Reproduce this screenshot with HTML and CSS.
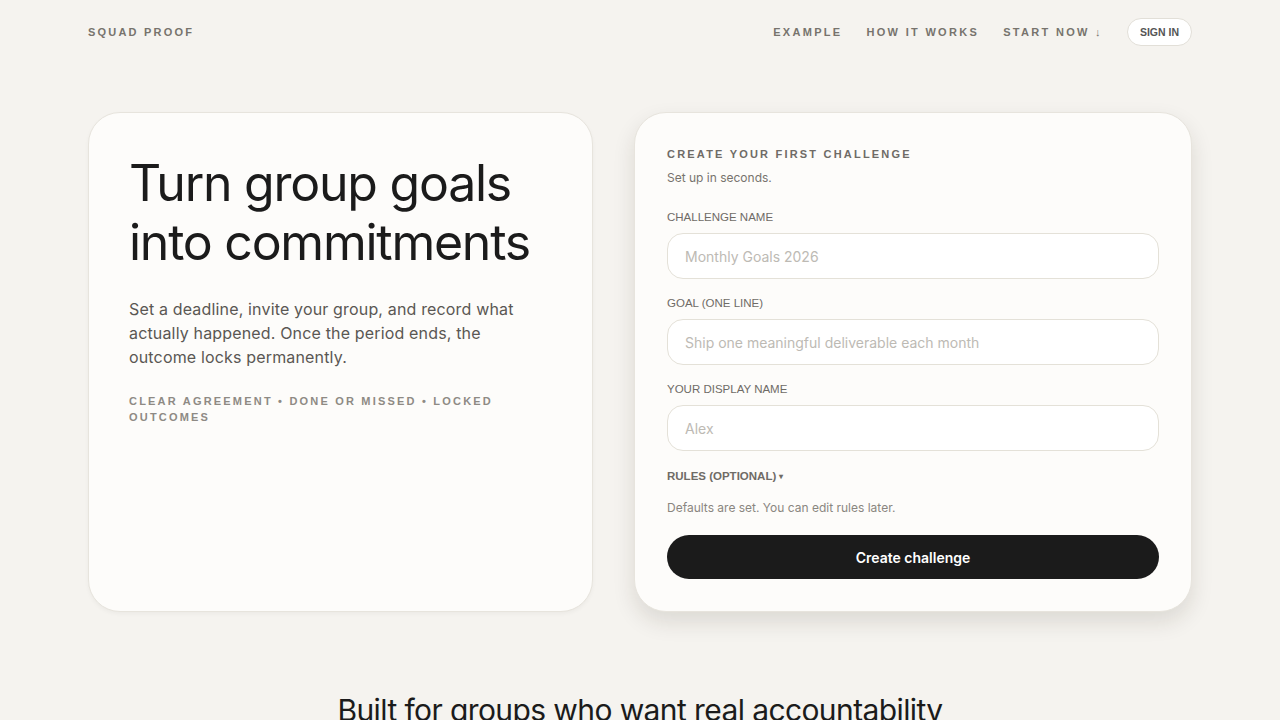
FILE: index.html
```html
<!DOCTYPE html>
<html lang="en">
<head>
<meta charset="utf-8">
<title>Squad Proof</title>
<link rel="stylesheet" href="styles.css">
</head>
<body>
<div class="page">
  <header class="nav">
    <div class="brand">SQUAD PROOF</div>
    <nav class="links">
      <a class="link" href="#">EXAMPLE</a>
      <a class="link" href="#">HOW IT WORKS</a>
      <a class="link" href="#">START NOW ↓</a>
      <a class="signin" href="#">SIGN IN</a>
    </nav>
  </header>

  <main class="hero">
    <section class="card intro">
      <h1 class="headline">Turn group goals into commitments</h1>
      <p class="lead">Set a deadline, invite your group, and record what actually happened. Once the period ends, the outcome locks permanently.</p>
      <p class="tags">CLEAR AGREEMENT • DONE OR MISSED • LOCKED OUTCOMES</p>
    </section>

    <section class="card form-card">
      <div class="form-title">CREATE YOUR FIRST CHALLENGE</div>
      <div class="form-sub">Set up in seconds.</div>
      <div class="fields">
        <label class="field">
          <span class="label">CHALLENGE NAME</span>
          <input class="input" type="text" placeholder="Monthly Goals 2026">
        </label>
        <label class="field">
          <span class="label">GOAL (ONE LINE)</span>
          <input class="input" type="text" placeholder="Ship one meaningful deliverable each month">
        </label>
        <label class="field">
          <span class="label">YOUR DISPLAY NAME</span>
          <input class="input" type="text" placeholder="Alex">
        </label>
      </div>
      <div class="rules">RULES (OPTIONAL) <span class="caret">▾</span></div>
      <div class="defaults">Defaults are set. You can edit rules later.</div>
      <button class="submit" type="button">Create challenge</button>
    </section>
  </main>

  <section class="built">
    <h2 class="built-title">Built for groups who want real accountability</h2>
  </section>
</div>
</body>
</html>
```

FILE: styles.css
```css
* { box-sizing: border-box; }
html, body { margin: 0; padding: 0; }
body {
  background: #f5f3ef;
  color: #1b1b1b;
  font-family: Inter, "Noto Sans", sans-serif;
  overflow: hidden;
}
.page {
  width: 1104px;
  margin: 0 auto;
}
.nav {
  height: 64px;
  display: flex;
  align-items: center;
  justify-content: space-between;
}
.brand {
  font-family: "Liberation Sans", Arial, sans-serif;
  font-weight: 700;
  font-size: 11px;
  letter-spacing: 0.2em;
  color: #77736d;
}
.links {
  display: flex;
  align-items: center;
  gap: 24px;
}
.link {
  font-family: "Liberation Sans", Arial, sans-serif;
  font-weight: 700;
  font-size: 11px;
  letter-spacing: 0.21em;
  color: #77736d;
  text-decoration: none;
}
.signin {
  font-family: "Liberation Sans", Arial, sans-serif;
  font-weight: 700;
  font-size: 10.5px;
  color: #555;
  text-decoration: none;
  background: #fff;
  border: 1px solid #e2dfd8;
  border-radius: 999px;
  height: 28px;
  padding: 0 12px;
  display: flex;
  align-items: center;
}
.hero {
  margin-top: 48px;
  display: grid;
  grid-template-columns: 505px 1fr;
  gap: 41px;
  align-items: stretch;
}
.card {
  background: #fdfcfa;
  border: 1px solid #e7e4dd;
  border-radius: 32px;
}
.intro {
  padding: 41px 40px 40px;
  box-shadow: 0 2px 4px rgba(0,0,0,0.04);
}
.headline {
  margin: 0;
  font-weight: 400;
  font-size: 50px;
  line-height: 59px;
  letter-spacing: -0.025em;
  color: #1b1b1b;
}
.lead {
  margin: 25px 0 0;
  max-width: 400px;
  font-size: 16px;
  line-height: 24px;
  letter-spacing: 0.01em;
  color: #5a5753;
}
.tags {
  margin: 24px 0 0;
  font-family: "Liberation Sans", Arial, sans-serif;
  font-weight: 700;
  font-size: 11px;
  line-height: 16px;
  letter-spacing: 0.2em;
  color: #8e8a84;
}
.form-card {
  padding: 33px 32px 32px;
  box-shadow: 0 10px 22px rgba(40,30,20,0.12);
}
.form-title {
  font-family: "Liberation Sans", Arial, sans-serif;
  font-weight: 700;
  font-size: 11px;
  line-height: 16px;
  letter-spacing: 0.2em;
  color: #6f6b66;
}
.form-sub {
  margin-top: 8px;
  font-size: 12px;
  line-height: 16px;
  color: #77736d;
}
.fields {
  margin-top: 23px;
  display: flex;
  flex-direction: column;
  gap: 16px;
}
.field {
  display: flex;
  flex-direction: column;
  gap: 8px;
}
.label {
  font-family: "Liberation Sans Narrow", "Liberation Sans", Arial, sans-serif;
  font-size: 11.5px;
  line-height: 16px;
  color: #6f6b66;
}
.input {
  height: 46px;
  border: 1px solid #e4e1d8;
  border-radius: 16px;
  background: #fff;
  padding: 0 17px;
  font-family: Inter, "Noto Sans", sans-serif;
  font-size: 14px;
  color: #1b1b1b;
  outline: none;
}
.input::placeholder { color: #bdbab4; }
.rules {
  margin-top: 17px;
  font-family: "Liberation Sans Narrow", "Liberation Sans", Arial, sans-serif;
  font-weight: 700;
  font-size: 11.5px;
  line-height: 16px;
  color: #6f6b66;
}
.caret { font-size: 8px; vertical-align: 1px; }
.defaults {
  margin-top: 15px;
  font-size: 12px;
  line-height: 16px;
  color: #8a8680;
}
.submit {
  margin-top: 19px;
  width: 100%;
  height: 44px;
  border: none;
  border-radius: 999px;
  background: #1b1b1b;
  color: #fff;
  font-family: Inter, "Noto Sans", sans-serif;
  font-weight: 600;
  font-size: 14px;
}
.built {
  margin-top: 80px;
  text-align: center;
}
.built-title {
  margin: 0;
  font-weight: 400;
  font-size: 30px;
  line-height: 36px;
  letter-spacing: -0.02em;
  color: #1b1b1b;
}
```
